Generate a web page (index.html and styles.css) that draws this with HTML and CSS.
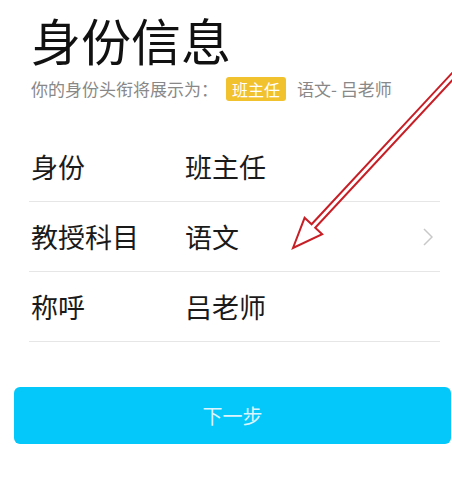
FILE: index.html
```html
<!DOCTYPE html>
<html lang="zh-CN">
<head>
  <meta charset="UTF-8">
  <meta name="viewport" content="width=device-width, initial-scale=1.0">
  <title>身份信息</title>
  <link rel="stylesheet" href="styles.css">
</head>
<body>
  <div class="page">
    <div class="header">
      <h1>身份信息</h1>
      <div class="subtitle">
        你的身份头衔将展示为：<span class="badge">班主任</span><span class="title-text">语文- 吕老师</span>
      </div>
    </div>

    <div class="form-list">
      <div class="row">
        <span class="label">身份</span>
        <span class="value">班主任</span>
      </div>
      <div class="row">
        <span class="label">教授科目</span>
        <span class="value">语文</span>
        <svg class="chevron" width="10" height="18" viewBox="0 0 10 18">
          <polyline points="1,1 9,9 1,17" fill="none" stroke="#c8c8c8" stroke-width="1.5"/>
        </svg>
      </div>
      <div class="row">
        <span class="label">称呼</span>
        <span class="value">吕老师</span>
      </div>
    </div>

    <button class="next-btn">下一步</button>

    <!-- annotation arrow drawn over the screenshot -->
    <svg class="arrow" width="452" height="494" viewBox="0 0 452 494">
      <polygon points="293,248 304.6,217.8 311.6,224.3 468.2,55.7 471.9,59.1 315.2,227.7 322.2,234.2"
               fill="#fff" stroke="#c81e26" stroke-width="2" stroke-linejoin="miter"/>
    </svg>
  </div>
</body>
</html>
```

FILE: styles.css
```css
body {
  margin: 0;
  background: #fff;
  font-family: "Noto Sans CJK SC", "Noto Sans", sans-serif;
  color: #1a1a1a;
}

.page {
  position: relative;
  width: 452px;
  height: 494px;
  overflow: hidden;
}

.header {
  padding: 9px 0 0 31px;
}

h1 {
  margin: 0;
  font-size: 50px;
  line-height: 60px;
  font-weight: 400;
  color: #111;
}

.subtitle {
  margin-top: 8px;
  font-size: 17px;
  line-height: 24px;
  color: #888;
  display: flex;
  align-items: center;
}

.badge {
  background: #f2c12e;
  color: #fff;
  font-size: 16px;
  line-height: 24px;
  padding: 0 6px;
  border-radius: 3px;
  margin-left: 8px;
}

.title-text {
  margin-left: 11px;
}

.form-list {
  margin: 31px 12px 0 29px;
}

.row {
  display: flex;
  align-items: center;
  height: 69px;
  border-bottom: 1px solid #e6e6e6;
  padding-left: 2px;
  font-size: 27px;
}

.label {
  width: 154px;
}

.value {
  flex: 1;
}

.chevron {
  margin-right: 7px;
}

.next-btn {
  display: block;
  margin: 45px 1px 0 14px;
  width: 437px;
  height: 57px;
  border: none;
  border-radius: 6px;
  background: #04c8fa;
  color: #dcf4fd;
  font-family: "Noto Sans CJK SC", sans-serif;
  font-size: 20px;
}

.arrow {
  position: absolute;
  left: 0;
  top: 0;
}
```
